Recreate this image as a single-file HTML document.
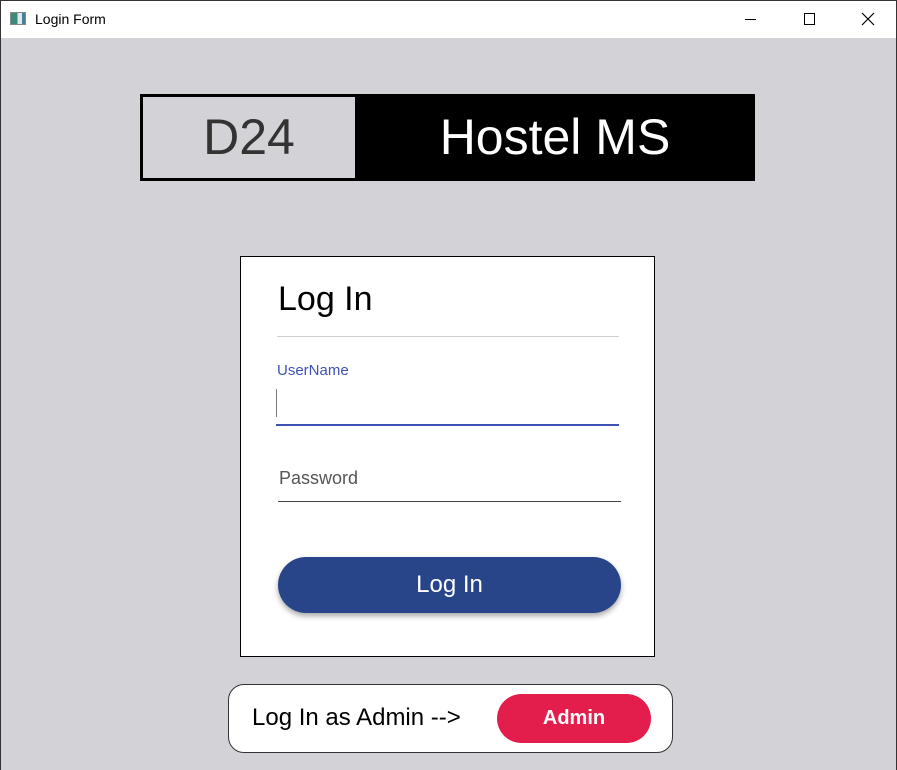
<!DOCTYPE html>
<html><head><meta charset="utf-8"><style>
*{margin:0;padding:0;box-sizing:border-box}
body{width:897px;height:770px;background:#d3d2d7;font-family:"Liberation Sans",sans-serif;position:relative;overflow:hidden}
.a{position:absolute}
</style></head><body>
<div class="a" style="left:0;top:0;width:897px;height:770px;border:1px solid #333;border-bottom:none"></div>
<div class="a" style="left:1px;top:1px;width:895px;height:37px;background:#fff"></div>
<div class="a" style="left:10px;top:12px;width:16px;height:13px;border:1px solid #888;background:linear-gradient(90deg,#3a8a78 0 45%,#dfe8ec 45% 80%,#4a7d9a 80%)"></div>
<div class="a" style="left:35px;top:11px;font-size:14px;color:#000">Login Form</div>
<div class="a" style="left:745px;top:19px;width:11px;height:1px;background:#000"></div>
<div class="a" style="left:804px;top:13px;width:11px;height:12px;border:1px solid #000"></div>
<svg class="a" style="left:861px;top:12px" width="14" height="14"><path d="M1 1L13 13M13 1L1 13" stroke="#000" stroke-width="1.2"/></svg>

<div class="a" style="left:140px;top:94px;width:615px;height:87px;background:#000"></div>
<div class="a" style="left:143px;top:97px;width:212px;height:81px;background:#d3d2d7;color:#333;font-size:50px;text-align:center;line-height:81px">D24</div>
<div class="a" style="left:355px;top:94px;width:400px;height:87px;color:#fff;font-size:50px;text-align:center;line-height:87px">Hostel MS</div>

<div class="a" style="left:240px;top:256px;width:415px;height:401px;background:#fff;border:1px solid #000"></div>
<div class="a" style="left:278px;top:280px;font-size:34px;color:#000">Log In</div>
<div class="a" style="left:277px;top:336px;width:342px;height:1px;background:#d0d0d0"></div>
<div class="a" style="left:277px;top:362px;font-size:15px;color:#3f51b5">UserName</div>
<div class="a" style="left:276px;top:389px;width:1px;height:28px;background:#777"></div>
<div class="a" style="left:276px;top:424px;width:343px;height:2px;background:#3f51b5"></div>
<div class="a" style="left:279px;top:468px;font-size:18px;color:#555">Password</div>
<div class="a" style="left:278px;top:501px;width:343px;height:1px;background:#444"></div>
<div class="a" style="left:278px;top:557px;width:343px;height:56px;border-radius:28px;background:#29458a;box-shadow:0 3px 6px rgba(0,0,0,.35);color:#fff;font-size:24px;text-align:center;line-height:56px">Log In</div>

<div class="a" style="left:228px;top:684px;width:445px;height:69px;border-radius:16px;background:#fff;border:1px solid #333"></div>
<div class="a" style="left:252px;top:704px;font-size:24px;color:#000">Log In as Admin --&gt;</div>
<div class="a" style="left:497px;top:694px;width:154px;height:49px;border-radius:25px;background:#e31e4c;color:#fff;font-size:20px;font-weight:bold;text-align:center;line-height:49px">Admin</div>
</body></html>
